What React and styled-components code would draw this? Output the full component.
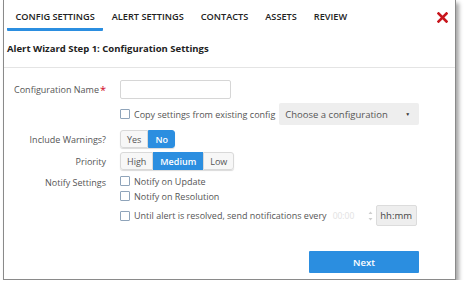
import styled, { createGlobalStyle } from "styled-components";

const GlobalStyle = createGlobalStyle`
	body {
		margin: 0;
		background: #fff;
		font-family: "Open Sans", "Liberation Sans", sans-serif;
	}
`;

const tabs = ["Config Settings", "Alert Settings", "Contacts", "Assets", "Review"];

function Segmented({ options, active }) {
	return (
		<Group>
			{options.map((o) => (
				<SegButton key={o} $active={o === active}>
					{o}
				</SegButton>
			))}
		</Group>
	);
}

function Check({ children }) {
	return (
		<CheckRow>
			<Box />
			<span>{children}</span>
		</CheckRow>
	);
}

function App() {
	return (
		<>
			<GlobalStyle />
			<Panel>
				<TabBar>
					{tabs.map((t, i) => (
						<Tab key={t} $active={i === 0}>
							{t}
						</Tab>
					))}
					<Close>
						<svg width="11" height="11" viewBox="0 0 11 11">
							<path d="M1.5 1.5 L9.5 9.5 M9.5 1.5 L1.5 9.5" stroke="#c8161d" strokeWidth="2.6" strokeLinecap="square" />
						</svg>
					</Close>
				</TabBar>
				<Heading>Alert Wizard Step 1: Configuration Settings</Heading>
				<Form>
					<Label>
						Configuration Name<Req>*</Req>
					</Label>
					<Field>
						<TextInput />
					</Field>
					<Label />
					<Field>
						<Check>Copy settings from existing config</Check>
						<Select>
							<span>Choose a configuration</span>
							<Caret>▼</Caret>
						</Select>
					</Field>
					<Label $gap={1}>Include Warnings?</Label>
					<Field $gap={1}>
						<Segmented options={["Yes", "No"]} active="No" />
					</Field>
					<Label>Priority</Label>
					<Field>
						<Segmented options={["High", "Medium", "Low"]} active="Medium" />
					</Field>
					<Label $top $gap={2}>Notify Settings</Label>
					<Stack>
						<Check>Notify on Update</Check>
						<Check>Notify on Resolution</Check>
						<Field>
							<Check>Until alert is resolved, send notifications every</Check>
							<TimeWrap>
								<TimeInput>00:00</TimeInput>
								<svg width="5" height="12" viewBox="0 0 5 12">
									<path d="M0.5 4 L2.5 1.5 L4.5 4 Z M0.5 8 L2.5 10.5 L4.5 8 Z" fill="#cfcfcf" />
								</svg>
								<Addon>hh:mm</Addon>
							</TimeWrap>
						</Field>
					</Stack>
				</Form>
				<Footer>
					<NextButton>Next</NextButton>
				</Footer>
			</Panel>
		</>
	);
}

export default App;

const Panel = styled.div`
	box-sizing: border-box;
	margin: 0 0 0 3px;
	width: 453px;
	height: 280px;
	border: 1px solid #8a8a8a;
	border-top: none;
	box-shadow: 3px 3px 4px rgba(0, 0, 0, 0.35);
	display: flex;
	flex-direction: column;
	position: relative;
`;

const TabBar = styled.div`
	display: flex;
	height: 31px;
	padding-left: 3px;
`;

const Tab = styled.div`
	font-size: 9.2px;
	font-weight: 600;
	text-transform: uppercase;
	color: #222;
	padding: 10px 8.5px 0 8.5px;
	box-sizing: border-box;
	height: 31px;
	border-bottom: 3px solid ${(p) => (p.$active ? "#2b8ee0" : "transparent")};
	border-radius: 1px;
	white-space: nowrap;
`;

const Close = styled.div`
	position: absolute;
	right: 7px;
	top: 6px;
`;

const Heading = styled.div`
	font-size: 9.5px;
	font-weight: 700;
	color: #222;
	padding: 11px 3px 0;
	height: 37px;
	box-sizing: border-box;
	border-bottom: 1px solid #e4e4e4;
`;

const Form = styled.div`
	display: grid;
	grid-template-columns: 104px 1fr;
	column-gap: 12px;
	row-gap: 4px;
	padding-top: 12px;
	font-size: 9px;
	color: #555;
`;

const Label = styled.div`
	display: flex;
	align-items: ${(p) => (p.$top ? "flex-start" : "center")};
	justify-content: flex-end;
	padding-right: 2px;
	margin-top: ${(p) => (p.$gap ? `${p.$gap}px` : "0")};
	white-space: nowrap;
`;

const Req = styled.span`
	color: #d0021b;
	margin-left: 1px;
	font-size: 11px;
	line-height: 9px;
`;

const Field = styled.div`
	display: flex;
	align-items: center;
	gap: 4px;
	margin-top: ${(p) => (p.$gap ? `${p.$gap}px` : "0")};
`;

const TextInput = styled.div`
	width: 111px;
	height: 19px;
	box-sizing: border-box;
	border: 1px solid #d6d6d6;
	border-radius: 2px;
	background: #fff;
`;

const CheckRow = styled.label`
	display: flex;
	align-items: center;
	gap: 4px;
	height: 12px;
	color: #555;
	white-space: nowrap;
`;

const Box = styled.span`
	width: 8px;
	height: 8px;
	border: 1px solid #8fa4ba;
	border-radius: 1px;
	background: #fff;
`;

const Select = styled.div`
	width: 140px;
	height: 22px;
	box-sizing: border-box;
	background: #eeeeee;
	border-radius: 2px;
	display: flex;
	align-items: center;
	justify-content: space-between;
	padding: 0 9px 0 6px;
	color: #555;
	font-size: 9.5px;
`;

const Caret = styled.span`
	font-size: 5px;
	color: #333;
`;

const Group = styled.div`
	display: flex;
	border-radius: 3px;
	box-shadow: 0 1px 1px rgba(0, 0, 0, 0.15);
`;

const SegButton = styled.div`
	height: 18px;
	box-sizing: border-box;
	padding: 0 6px;
	display: flex;
	align-items: center;
	font-size: 9px;
	border: 1px solid ${(p) => (p.$active ? "#2b8ee0" : "#d9d9d9")};
	background: ${(p) => (p.$active ? "#2b8ee0" : "#f7f7f7")};
	color: ${(p) => (p.$active ? "#fff" : "#555")};
	font-weight: ${(p) => (p.$active ? 600 : 400)};
	&:first-child {
		border-radius: 3px 0 0 3px;
	}
	&:last-child {
		border-radius: 0 3px 3px 0;
	}
`;

const Stack = styled.div`
	display: flex;
	flex-direction: column;
	gap: 3px;
	margin-top: 1px;
`;

const TimeWrap = styled.div`
	display: flex;
	align-items: center;
`;

const TimeInput = styled.div`
	width: 35px;
	color: #e2e2e2;
	font-size: 8.5px;
	padding-left: 2px;
`;

const Addon = styled.div`
	width: 41px;
	height: 21px;
	margin-left: 3px;
	box-sizing: border-box;
	background: #eeeeee;
	border: 1px solid #dcdcdc;
	border-radius: 2px;
	display: flex;
	align-items: center;
	justify-content: center;
	color: #444;
	font-size: 9.5px;
`;

const Footer = styled.div`
	display: flex;
	justify-content: flex-end;
	padding-right: 36px;
	margin-top: auto;
	margin-bottom: 6px;
`;

const NextButton = styled.div`
	width: 110px;
	height: 22px;
	background: #2b8ee0;
	color: #fff;
	font-size: 9.5px;
	font-weight: 600;
	display: flex;
	align-items: center;
	justify-content: center;
	border-radius: 1px;
`;
